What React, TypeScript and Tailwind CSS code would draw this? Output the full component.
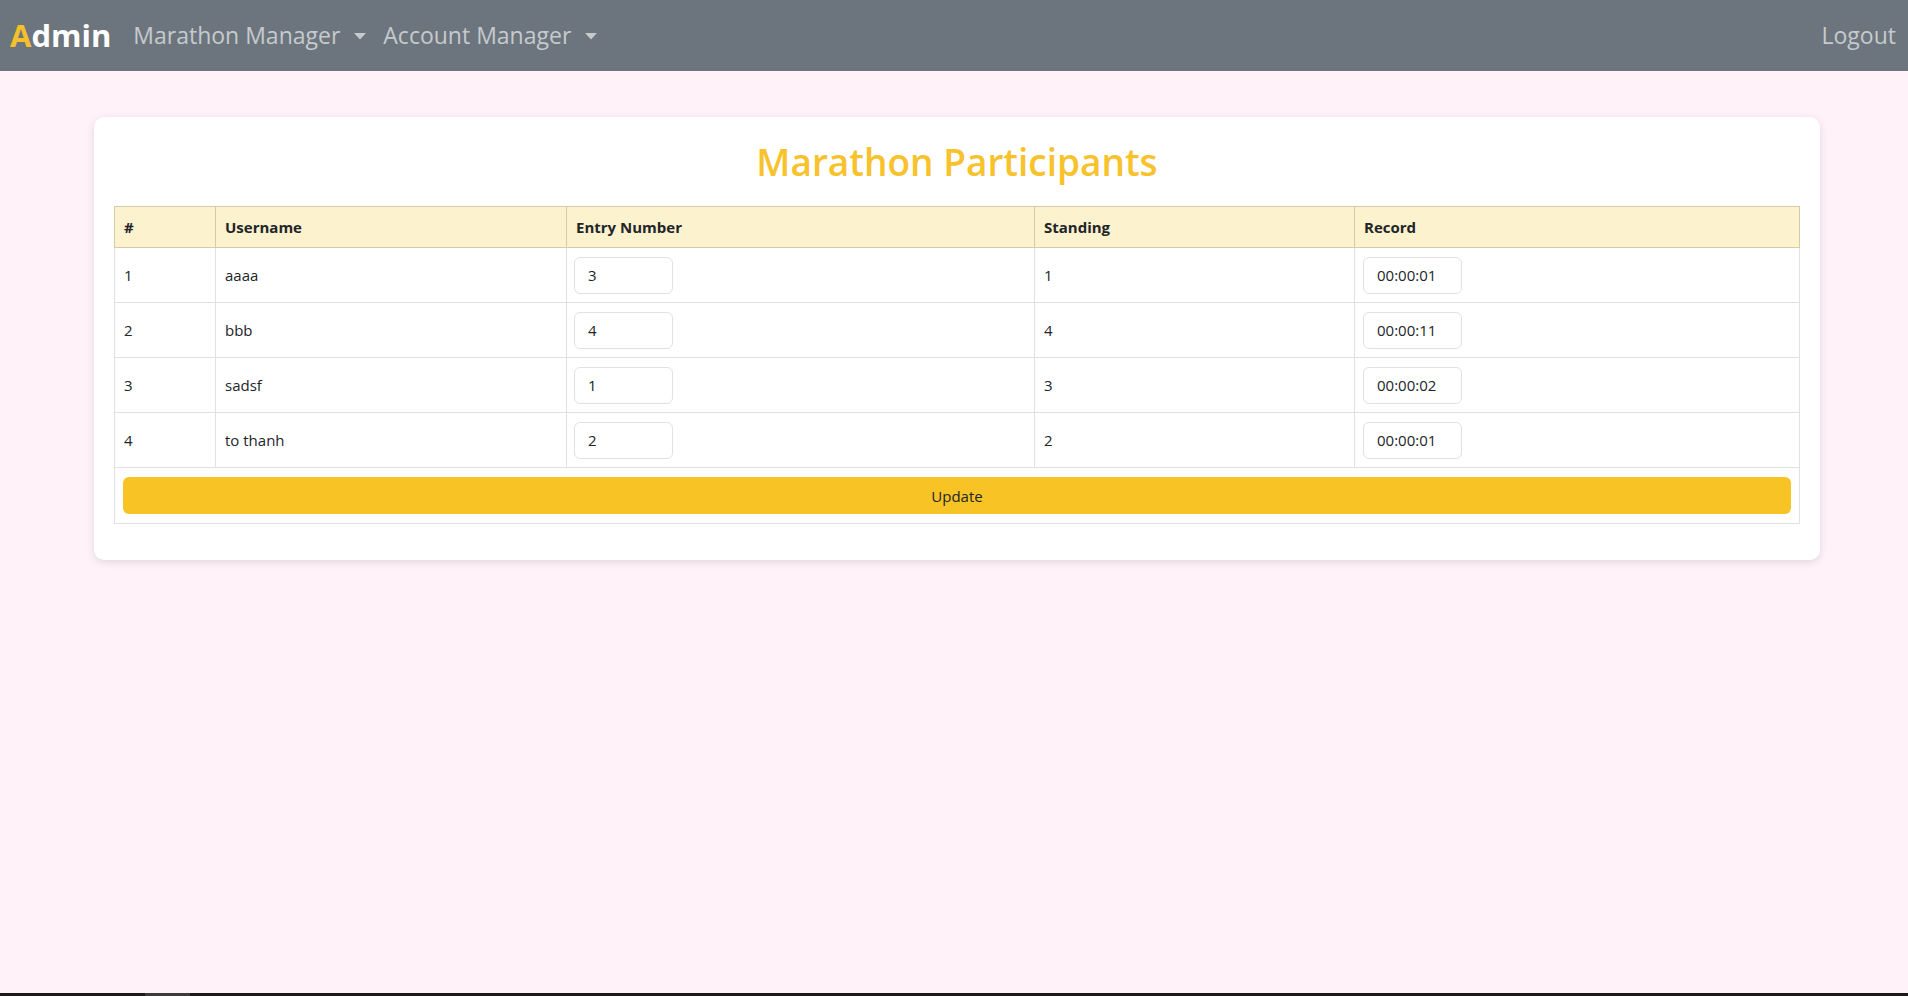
const participants = [
  { id: 1, username: "aaaa", entry: "3", standing: 1, record: "00:00:01" },
  { id: 2, username: "bbb", entry: "4", standing: 4, record: "00:00:11" },
  { id: 3, username: "sadsf", entry: "1", standing: 3, record: "00:00:02" },
  { id: 4, username: "to thanh", entry: "2", standing: 2, record: "00:00:01" },
];

const Caret = () => (
  <svg width="12" height="7" viewBox="0 0 12 7" className="ml-[14px] mt-[1px]">
    <path d="M0 0 L12 0 L6 6.5 Z" fill="#c6cacd" />
  </svg>
);

const NavDropdown = ({ label }: { label: string }) => (
  <button className="flex items-center text-[23px] text-[#c6cacd] leading-none">
    {label}
    <Caret />
  </button>
);

const CellInput = ({ value, width }: { value: string; width: string }) => (
  <input
    defaultValue={value}
    className={`${width} h-[37px] rounded-[6px] border border-[#dee2e6] bg-white px-[13px] text-[15px] text-[#212529] outline-none`}
  />
);

export default function App() {
  return (
    <div
      className="min-h-screen flex flex-col bg-[#fff3f9]"
      style={{ fontFamily: '"Open Sans", "Noto Sans", sans-serif' }}
    >
      <nav className="h-[71px] bg-[#6c757d] flex items-center pl-[10px] pr-[12px]">
        <span className="text-[31px] font-bold leading-none text-white mr-[22px]">
          <span className="text-[#f6c02a]">A</span>dmin
        </span>
        <div className="flex items-center gap-[17px]">
          <NavDropdown label="Marathon Manager" />
          <NavDropdown label="Account Manager" />
        </div>
        <a className="ml-auto text-[23px] text-[#c6cacd] leading-none">Logout</a>
      </nav>

      <main className="pt-[46px] pl-[94px] pr-[88px]">
        <div className="bg-white rounded-[10px] shadow-[0_2px_8px_rgba(0,0,0,0.12)] px-[20px] pt-[23px] pb-[36px]">
          <h1 className="text-center text-[37px] font-semibold leading-[1.2] text-[#f7c22b] mb-[22px]">
            Marathon Participants
          </h1>

          <table className="w-full border-collapse text-[15px] text-[#212529]">
            <thead>
              <tr className="bg-[#fcf2cd] h-[41px]">
                <th className="w-[101px] border border-[#d5cba6] px-[9px] text-left font-bold">#</th>
                <th className="w-[351px] border border-[#d5cba6] px-[9px] text-left font-bold">Username</th>
                <th className="w-[468px] border border-[#d5cba6] px-[9px] text-left font-bold">Entry Number</th>
                <th className="w-[320px] border border-[#d5cba6] px-[9px] text-left font-bold">Standing</th>
                <th className="border border-[#d5cba6] px-[9px] text-left font-bold">Record</th>
              </tr>
            </thead>
            <tbody>
              {participants.map((p) => (
                <tr key={p.id} className="h-[55px]">
                  <td className="border border-[#dee2e6] px-[9px]">{p.id}</td>
                  <td className="border border-[#dee2e6] px-[9px]">{p.username}</td>
                  <td className="border border-[#dee2e6] px-[7px]">
                    <CellInput value={p.entry} width="w-[99px]" />
                  </td>
                  <td className="border border-[#dee2e6] px-[9px]">{p.standing}</td>
                  <td className="border border-[#dee2e6] px-[8px]">
                    <CellInput value={p.record} width="w-[99px]" />
                  </td>
                </tr>
              ))}
              <tr>
                <td colSpan={5} className="border border-[#dee2e6] px-[8px] pt-[9px] pb-[9px]">
                  <button className="w-full h-[37px] rounded-[6px] bg-[#f7c325] text-[15px] text-[#212529]">
                    Update
                  </button>
                </td>
              </tr>
            </tbody>
          </table>
        </div>
      </main>

      <div className="mt-auto h-[3px] bg-[#1a1a1a] flex">
        <div className="ml-[145px] w-[45px] bg-[#3b3b3b]" />
      </div>
    </div>
  );
}
